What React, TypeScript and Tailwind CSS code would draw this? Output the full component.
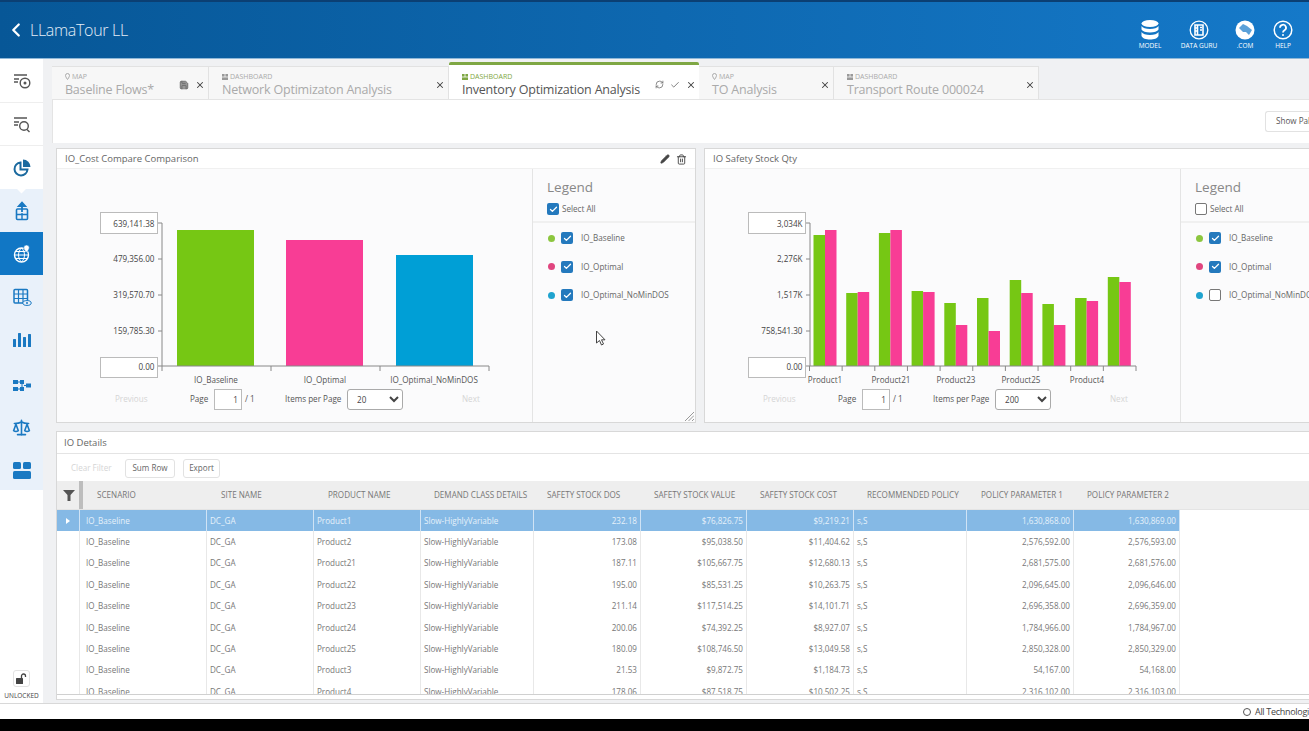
import { Check, ChevronLeft, Pencil, RefreshCw, Save, Scale, Trash2, X } from "lucide-react";
import type { ReactNode } from "react";

const GREEN = "#76c714";
const PINK = "#f83d95";
const BLUE = "#009fd6";

const columns = [
  { label: "SCENARIO", pad: "pl-[17px]" },
  { label: "SITE NAME", pad: "pl-[14px]" },
  { label: "PRODUCT NAME", pad: "pl-[14px]" },
  { label: "DEMAND CLASS DETAILS", pad: "pl-[13px]" },
  { label: "SAFETY STOCK DOS", pad: "pl-[13px]" },
  { label: "SAFETY STOCK VALUE", pad: "pl-[13px]" },
  { label: "SAFETY STOCK COST", pad: "pl-[13px]" },
  { label: "RECOMMENDED POLICY", pad: "pl-[13px]" },
  { label: "POLICY PARAMETER 1", pad: "pl-[14px]" },
  { label: "POLICY PARAMETER 2", pad: "pl-[13px]" },
];

const rows = [
  ["Product1", "232.18", "$76,826.75", "$9,219.21", "1,630,868.00", "1,630,869.00"],
  ["Product2", "173.08", "$95,038.50", "$11,404.62", "2,576,592.00", "2,576,593.00"],
  ["Product21", "187.11", "$105,667.75", "$12,680.13", "2,681,575.00", "2,681,576.00"],
  ["Product22", "195.00", "$85,531.25", "$10,263.75", "2,096,645.00", "2,096,646.00"],
  ["Product23", "211.14", "$117,514.25", "$14,101.71", "2,696,358.00", "2,696,359.00"],
  ["Product24", "200.06", "$74,392.25", "$8,927.07", "1,784,966.00", "1,784,967.00"],
  ["Product25", "180.09", "$108,746.50", "$13,049.58", "2,850,328.00", "2,850,329.00"],
  ["Product3", "21.53", "$9,872.75", "$1,184.73", "54,167.00", "54,168.00"],
  ["Product4", "178.06", "$87,518.75", "$10,502.25", "2,316,102.00", "2,316,103.00"],
];

function Svg({ children, size = 20, color = "currentColor" }: { children: ReactNode; size?: number; color?: string }) {
  return (
    <svg width={size} height={size} viewBox="0 0 20 20" fill="none" stroke={color} strokeWidth="1.4" className="shrink-0">
      {children}
    </svg>
  );
}

const sideIcons: { key: string; node: ReactNode }[] = [
  {
    key: "history",
    node: (
      <Svg color="#555">
        <path d="M2 4h13M2 8h5M2 11h4" />
        <circle cx="13" cy="12" r="4.8" />
        <circle cx="13" cy="12" r="0.8" fill="#555" />
      </Svg>
    ),
  },
  {
    key: "search",
    node: (
      <Svg color="#555">
        <path d="M2 4h13M2 8h5M2 11h4" />
        <circle cx="12" cy="12" r="4.3" />
        <path d="M15 15.5l2.5 2.5" />
      </Svg>
    ),
  },
  {
    key: "pie",
    node: (
      <Svg color="#1b6a9f" size={20}>
        <path d="M8.5 4.5a6.5 6.5 0 1 0 7 7H8.5z" strokeWidth="2" />
        <path d="M11 1.5a7.5 7.5 0 0 1 7.5 7.5H11z" fill="#1b6a9f" stroke="none" />
      </Svg>
    ),
  },
  {
    key: "upload",
    node: (
      <Svg color="#1a79c2">
        <rect x="4.5" y="8" width="11" height="10.5" rx="1" strokeWidth="1.6" />
        <path d="M4.5 13.5h11M10 12v6.5" strokeWidth="1.4" />
        <path d="M10 11V2M6.8 5L10 1.5 13.200 5z" strokeWidth="1.8" fill="#1a79c2" />
      </Svg>
    ),
  },
  {
    key: "globe",
    node: (
      <Svg color="#fff" size={20}>
        <circle cx="9.500" cy="11" r="7" />
        <path d="M2.500 11h14M3.500 7.500h12M3.500 14.500h12M9.500 4c-4 4-4 10 0 14M9.500 4c4 4 4 10 0 14" strokeWidth="1" />
        <path d="M14.500 1a2.800 2.800 0 0 1 2.800 2.800c0 2-2.800 4.500-2.800 4.500s-2.800-2.500-2.800-4.500A2.800 2.800 0 0 1 14.500 1z" fill="#fff" stroke="#1177c5" strokeWidth="0.6" />
      </Svg>
    ),
  },
  {
    key: "table",
    node: (
      <Svg color="#1a79c2">
        <rect x="2" y="2.500" width="13.500" height="13.500" rx="1" strokeWidth="1.500" />
        <path d="M2 7h13.500M2 11.500h13.500M6.500 2.500V16M11 2.500V16" strokeWidth="1.200" />
        <ellipse cx="15" cy="16" rx="4.200" ry="2.400" fill="#e9f1fa" strokeWidth="1" />
        <circle cx="15" cy="16" r="1" fill="#1a79c2" stroke="none" />
      </Svg>
    ),
  },
  {
    key: "bars",
    node: (
      <svg width="18" height="15" viewBox="0 0 18 15" fill="#1a79c2" className="shrink-0">
        <rect x="0" y="7" width="3" height="8" rx="0.5" />
        <rect x="5" y="1" width="3" height="14" rx="0.5" />
        <rect x="10" y="5" width="3" height="10" rx="0.5" />
        <rect x="15" y="2" width="3" height="13" rx="0.5" />
      </svg>
    ),
  },
  {
    key: "flow",
    node: (
      <svg width="18" height="11" viewBox="0 0 18 11" fill="#1a79c2" className="shrink-0">
        <rect x="0" y="0" width="5" height="4" />
        <rect x="7" y="0" width="4" height="4" />
        <rect x="0" y="7" width="5" height="4" />
        <rect x="7" y="7" width="4" height="4" />
        <rect x="13" y="3.500" width="5" height="4" />
        <path d="M5 1.500h2v1H5zM5 8.500h2v1H5zM11 5h2v1h-2zM8.500 4h1v3h-1z" />
      </svg>
    ),
  },
  { key: "scale", node: <Scale size={19} color="#1a79c2" strokeWidth={2} className="shrink-0" /> },
  {
    key: "blocks",
    node: (
      <svg width="18" height="17" viewBox="0 0 18 17" fill="#1a79c2" className="shrink-0">
        <rect x="0" y="0" width="8" height="7" rx="1.500" />
        <rect x="10" y="0" width="8" height="7" rx="1.500" />
        <rect x="0" y="9" width="18" height="8" rx="1.500" />
      </svg>
    ),
  },
];

function Sidebar() {
  return (
    <aside className="w-[43px] shrink-0 flex flex-col bg-white">
      <div className="h-px" />
      {sideIcons.map((item, i) => (
        <div
          key={item.key}
          className={`relative h-[43px] flex items-center justify-center ${
            i === 4 ? "bg-[#1177c5]" : i > 2 ? "bg-[#e9f1fa]" : "bg-white"
          } ${i < 2 ? "border-b border-[#eeeeee]" : ""} ${i === 7 ? "pt-[5px]" : i > 7 ? "pt-1" : ""}`}
        >
          {i === 3 && <span className="absolute -top-[4px] left-[18px] w-[7px] h-[7px] rotate-45 bg-white" />}
          {item.node}
        </div>
      ))}
      <div className="mt-auto flex flex-col items-center pb-[3px]">
        <div className="w-[17px] h-[17px] rounded-[3px] border border-[#e2e2e2] flex items-center justify-center">
          <svg width="11" height="11" viewBox="0 0 11 11" fill="#444">
            <rect x="0" y="5" width="7" height="6" rx="0.500" />
            <path d="M5.500 5V3a2 2 0 0 1 4 0v1" fill="none" stroke="#444" strokeWidth="1.300" />
          </svg>
        </div>
        <span className="mt-[4px] text-[6.5px] leading-[9px] text-[#444]">UNLOCKED</span>
      </div>
    </aside>
  );
}

function HeaderItem({ label, icon, className }: { label: string; icon: ReactNode; className: string }) {
  return (
    <div className={`flex flex-col items-center ${className}`}>
      <div className="h-[22px] flex items-center justify-center">{icon}</div>
      <span className="text-[6.5px] leading-[9px] text-white whitespace-nowrap">{label}</span>
    </div>
  );
}

function Header() {
  return (
    <header className="h-[59px] shrink-0 flex items-center border-t-2 border-b border-t-[#0b3f73] border-b-[#8fb8d8] bg-gradient-to-r from-[#075797] to-[#1579c9] pl-[5px] pr-[17px]">
      <ChevronLeft size={22} color="#fff" strokeWidth={2.500} />
      <span className="ml-[3px] text-[16px] font-light text-[#e4eef7] tracking-[-0.3px]">LLamaTour LL</span>
      <div className="ml-auto self-start flex items-start pt-[17px]">
        <HeaderItem
          label="MODEL"
          className="w-[24px]"
          icon={
            <svg width="18" height="20" viewBox="0 0 18 20" fill="#fff">
              <ellipse cx="9" cy="3.500" rx="8.500" ry="3.500" />
              <path d="M0.500 6c1 2 4.500 3 8.500 3s7.500-1 8.500-3v3.500c-1 2-4.500 3-8.500 3s-7.500-1-8.500-3zM0.500 12c1 2 4.500 3 8.500 3s7.500-1 8.500-3v4c-1 2.500-4.500 3.500-8.500 3.500S1.500 18.500.5 16z" />
            </svg>
          }
        />
        <HeaderItem
          label="DATA GURU"
          className="w-[38px] ml-[18px]"
          icon={
            <svg width="20" height="20" viewBox="0 0 20 20" fill="none" stroke="#fff" strokeWidth="1.300">
              <circle cx="10" cy="10" r="8.800" />
              <path d="M6 5h8v10H6zM8.500 5v10M6 8h3M6 11h3" strokeWidth="1.600" />
              <path d="M11 7.500h2M11 10h2" strokeWidth="1.400" />
            </svg>
          }
        />
        <HeaderItem
          label=".COM"
          className="w-[18px] ml-[18px]"
          icon={
            <svg width="20" height="20" viewBox="0 0 20 20" fill="#fff">
              <circle cx="10" cy="10" r="9.500" />
              <path d="M4 8l4-4 4 2 5 4-3 5-3-3-3 0z" fill="#1579c9" opacity="0.700" />
            </svg>
          }
        />
        <HeaderItem
          label="HELP"
          className="w-[18px] ml-[20px]"
          icon={
            <svg width="20" height="20" viewBox="0 0 20 20" fill="none" stroke="#fff" strokeWidth="1.500">
              <circle cx="10" cy="10" r="8.800" />
              <path d="M7 7.800a3 3 0 1 1 4.500 2.500c-1 .6-1.500 1.200-1.500 2.200" strokeWidth="1.800" />
              <circle cx="10" cy="15" r="1" fill="#fff" stroke="none" />
            </svg>
          }
        />
      </div>
    </header>
  );
}

function DashGlyph({ color }: { color: string }) {
  return (
    <svg width="6" height="6" viewBox="0 0 6 6" fill={color} className="shrink-0">
      <rect x="0" y="0" width="2.600" height="2.600" />
      <rect x="3.400" y="0" width="2.600" height="2.600" />
      <rect x="0" y="3.400" width="6" height="2.600" />
    </svg>
  );
}

function MapGlyph() {
  return (
    <svg width="5" height="7" viewBox="0 0 5 7" fill="none" stroke="#999" strokeWidth="0.800" className="shrink-0">
      <path d="M2.500.5A2 2 0 0 1 4.500 2.500C4.500 4 2.500 6.500 2.500 6.500S.5 4 .5 2.500A2 2 0 0 1 2.500.5z" />
    </svg>
  );
}

function Tab({
  kind,
  title,
  width,
  active,
  children,
}: {
  kind: "MAP" | "DASHBOARD";
  title: string;
  width: string;
  active?: boolean;
  children?: ReactNode;
}) {
  return (
    <div
      className={`${width} shrink-0 relative flex items-end pl-[13px] pr-[3px] ${
        active
          ? "h-[37px] -mt-[4px] bg-white border-t-[3px] border-t-[#7fa744] rounded-t-[2px] z-10 -mb-px"
          : "h-[33px] bg-[#f7f7f7] border-r border-t border-[#e2e2e2]"
      }`}
    >
      <div className="min-w-0 flex-1">
        <div className={`flex items-center gap-[2px] text-[7px] leading-[9px] ${active ? "text-[#7fa744]" : "text-[#aaaaaa]"}`}>
          {kind === "MAP" ? <MapGlyph /> : <DashGlyph color={active ? "#7fa744" : "#999"} />}
          {kind}
        </div>
        <div className={`text-[12.5px] tracking-[-0.2px] leading-[18px] whitespace-nowrap ${active ? "text-[#555]" : "text-[#aaaaaa]"}`}>{title}</div>
      </div>
      <div className="flex items-center gap-[6px] h-[21px] self-end mb-[4px]">
        {children}
        <X size={10} color="#444" strokeWidth={2.500} />
      </div>
    </div>
  );
}

function Tabs() {
  return (
    <div className="h-[33px] shrink-0 mt-[7px] flex items-start border-b border-[#e4e4e4] box-content">
      <Tab kind="MAP" title="Baseline Flows*" width="w-[157px]">
        <Save size={10} color="#666" fill="#999" />
      </Tab>
      <Tab kind="DASHBOARD" title="Network Optimizaton Analysis" width="w-[240px]" />
      <Tab kind="DASHBOARD" title="Inventory Optimization Analysis" width="w-[250px]" active>
        <RefreshCw size={9} color="#666" />
        <Check size={10} color="#666" />
      </Tab>
      <Tab kind="MAP" title="TO Analysis" width="w-[135px]" />
      <Tab kind="DASHBOARD" title="Transport Route 000024" width="w-[205px]" />
    </div>
  );
}

type Chart = {
  maxLabel: string;
  ticks: string[];
  bars: { x: number; w: number; top: number; fill: string }[];
  xTicks: number[];
  labels: { text: string; x: number }[];
  axisEnd: number;
};

const chartA: Chart = {
  maxLabel: "639,141.38",
  ticks: ["479,356.00", "319,570.70", "159,785.30"],
  bars: [
    { x: 120, w: 77, top: 61, fill: GREEN },
    { x: 229, w: 77, top: 71, fill: PINK },
    { x: 339, w: 77, top: 86, fill: BLUE },
  ],
  xTicks: [105, 214, 323, 432],
  labels: [
    { text: "IO_Baseline", x: 159 },
    { text: "IO_Optimal", x: 268 },
    { text: "IO_Optimal_NoMinDOS", x: 377 },
  ],
  axisEnd: 432,
};

const pairs = [
  [235, 230],
  [293, 292],
  [233, 230],
  [291, 292],
  [303, 325],
  [298, 331],
  [280, 293],
  [304, 325],
  [298, 301],
  [277, 282],
];

const chartB: Chart = {
  maxLabel: "3,034K",
  ticks: ["2,276K", "1,517K", "758,541.30"],
  bars: pairs.flatMap(([g, p], i) => [
    { x: 108.500 + i * 32.700, w: 11.500, top: g - 169, fill: GREEN },
    { x: 120.000 + i * 32.700, w: 11.500, top: p - 169, fill: PINK },
  ]),
  xTicks: Array.from({ length: 11 }, (_, i) => 104.500 + i * 32.650),
  labels: [
    { text: "Product1", x: 120 },
    { text: "Product21", x: 186 },
    { text: "Product23", x: 251 },
    { text: "Product25", x: 316 },
    { text: "Product4", x: 382 },
  ],
  axisEnd: 431,
};

function ChartPlot({ chart, left }: { chart: Chart; left: number }) {
  const base = 197;
  const tickY = [54, 90, 126, 162];
  const axisX = left + 67;
  return (
    <svg width="476" height="220" className="block font-['Open_Sans',sans-serif]">
      {chart.bars.map((b, i) => (
        <rect key={i} x={b.x} y={b.top} width={b.w} height={base - b.top} fill={b.fill} />
      ))}
      <path d={`M${axisX} 54V${base}M${axisX - 4} ${base}H${chart.axisEnd}`} stroke="#888" fill="none" />
      {chart.xTicks.map((x) => (
        <path key={x} d={`M${x} ${base}v5`} stroke="#888" />
      ))}
      {tickY.map((y) => (
        <path key={y} d={`M${axisX - 4} ${y}h4`} stroke="#888" />
      ))}
      <rect x={left + 5.500} y="43.500" width="57" height="21" fill="#fff" stroke="#bbb" />
      <rect x={left + 5.500} y="188.500" width="57" height="20" fill="#fff" stroke="#bbb" />
      <text x={left + 59.500} y="58" textAnchor="end" fontSize="8.100" fill="#444">{chart.maxLabel}</text>
      {chart.ticks.map((t, i) => (
        <text key={t} x={left + 59.500} y={tickY[i + 1] + 3} textAnchor="end" fontSize="8.100" fill="#444">{t}</text>
      ))}
      <text x={left + 59.500} y="201" textAnchor="end" fontSize="8.100" fill="#444">0.00</text>
      {chart.labels.map((l) => (
        <text key={l.text} x={l.x} y="214" textAnchor="middle" fontSize="8.100" fill="#555">{l.text}</text>
      ))}
    </svg>
  );
}

function Pager({ perPage }: { perPage: string }) {
  return (
    <div className="flex items-center h-[21px] text-[8.100px] text-[#555] whitespace-nowrap">
      <span className="ml-[58px] w-[75px] text-[#d5d5d5]">Previous</span>
      <span className="w-[24px]">Page</span>
      <input
        readOnly
        value="1"
        className="w-[28px] h-[21px] border border-[#bbb] bg-white text-right pr-[3px] text-[8.100px] text-[#444]"
      />
      <span className="ml-[3px] w-[40px]">/ 1</span>
      <span className="w-[62px]">Items per Page</span>
      <select className="w-[56px] h-[21px] border border-[#aaa] rounded-[3px] bg-white pl-[5px] text-[8.100px] text-[#444]" defaultValue={perPage}>
        <option>{perPage}</option>
      </select>
      <span className="ml-[59px] text-[#d5d5d5]">Next</span>
    </div>
  );
}

function CheckBox({ on }: { on: boolean }) {
  return (
    <span
      className={`w-[12px] h-[12px] shrink-0 rounded-[2px] flex items-center justify-center ${
        on ? "bg-[#2479bd]" : "bg-white border border-[#777]"
      }`}
    >
      {on && <Check size={9} color="#fff" strokeWidth={3.500} />}
    </span>
  );
}

function Legend({ all, items }: { all: boolean; items: { label: string; color: string; on: boolean }[] }) {
  return (
    <div className="w-[163px] shrink-0 border-l border-[#e4e4e4] text-[8.100px] text-[#666] overflow-hidden">
      <div className="h-[54px] border-b-2 border-[#f0f0f0] pl-[14px] pt-[9px]">
        <div className="text-[13.500px] leading-[18px] text-[#888]">Legend</div>
        <div className="flex items-center gap-[3px] mt-[7px]">
          <CheckBox on={all} />
          <span>Select All</span>
        </div>
      </div>
      <div className="pt-[1px]">
        {items.map((it) => (
          <div key={it.label} className="h-[28.500px] flex items-center pl-[15px] whitespace-nowrap">
            <span className="w-[7px] h-[7px] rounded-full" style={{ backgroundColor: it.color }} />
            <span className="ml-[6px]">
              <CheckBox on={it.on} />
            </span>
            <span className="ml-[8px]">{it.label}</span>
          </div>
        ))}
      </div>
    </div>
  );
}

function ChartPanel({
  title,
  chart,
  left,
  perPage,
  all,
  items,
  tools,
}: {
  title: string;
  chart: Chart;
  left: number;
  perPage: string;
  all: boolean;
  items: { label: string; color: string; on: boolean }[];
  tools?: boolean;
}) {
  return (
    <section className="relative w-[640px] h-[275px] shrink-0 bg-[#fbfbfc] border border-[#d8d8d8] flex flex-col">
      <div className="h-[20px] shrink-0 bg-white border-b border-[#f0f0f0] flex items-center px-[8px] pt-px text-[9.500px] text-[#666]">
        {title}
        {tools && (
          <div className="ml-auto flex items-center gap-[6px]">
            <Pencil size={10} color="#444" fill="#444" />
            <Trash2 size={11} color="#444" />
          </div>
        )}
      </div>
      <div className="flex flex-1 min-h-0">
        <div className="flex-1 min-w-0">
          <ChartPlot chart={chart} left={left} />
          <Pager perPage={perPage} />
        </div>
        <Legend all={all} items={items} />
      </div>
      <svg width="10" height="10" viewBox="0 0 10 10" stroke="#999" className="absolute right-[1px] bottom-[1px]">
        <path d="M1 10L10 1M4.500 10L10 4.500M8 10l2-2" />
      </svg>
    </section>
  );
}

function DetailsTable() {
  const grid = "grid w-[1123px] grid-cols-[23px_127px_107px_107px_113px_107px_106px_107px_113px_107px_106px]";
  return (
    <section className="w-[1290px] h-[269px] shrink-0 bg-white border border-[#d8d8d8] flex flex-col overflow-hidden">
      <div className="h-[22px] shrink-0 border-b border-[#e4e4e4] flex items-center pl-[7px] pt-[2px] text-[9.500px] text-[#666]">IO Details</div>
      <div className="h-[27px] shrink-0 flex items-center pt-px text-[8.100px] text-[#666]">
        <span className="ml-[14px] w-[54px] text-[#d5d5d5]">Clear Filter</span>
        <button className="w-[50px] h-[19px] border border-[#e2e2e2] rounded-[3px]">Sum Row</button>
        <button className="ml-[8px] w-[37px] h-[19px] border border-[#e2e2e2] rounded-[3px]">Export</button>
      </div>
      <div className="h-[28px] shrink-0 bg-[#eeeeee]">
        <div className={`${grid} h-full text-[8.100px] text-[#777] items-center whitespace-nowrap`}>
          <div className="h-full flex items-center justify-center relative">
            <svg width="12" height="11" viewBox="0 0 12 11" fill="#555">
              <path d="M0 0h12L7.500 5v6h-3V5z" />
            </svg>
            <span className="absolute right-[-3px] top-0 w-[4px] h-full bg-[#bdbdbd]" />
          </div>
          {columns.map((c) => (
            <div key={c.label} className={c.pad}>{c.label}</div>
          ))}
        </div>
      </div>
      <div className="h-[185px] shrink-0 overflow-hidden border-t border-[#e4e4e4]">
        {rows.map((r, i) => {
          const cell = `h-full flex items-center border-r ${i === 0 ? "border-[#cfe3f5]" : "border-[#e8e8e8]"}`;
          return (
            <div
              key={r[0]}
              className={`${grid} h-[21.400px] text-[8.100px] whitespace-nowrap ${
                i === 0 ? "bg-[#85b9e5] text-[#e6f1fa]" : "text-[#777]"
              }`}
            >
              <div className={`${cell} justify-center`}>
                {i === 0 && <span className="border-y-[3px] border-l-[4px] border-y-transparent border-l-white" />}
              </div>
              <div className={`${cell} pl-[6px]`}>IO_Baseline</div>
              <div className={`${cell} pl-[3px]`}>DC_GA</div>
              <div className={`${cell} pl-[3px]`}>{r[0]}</div>
              <div className={`${cell} pl-[3px]`}>Slow-HighlyVariable</div>
              <div className={`${cell} justify-end pr-[3px]`}>{r[1]}</div>
              <div className={`${cell} justify-end pr-[3px]`}>{r[2]}</div>
              <div className={`${cell} justify-end pr-[3px]`}>{r[3]}</div>
              <div className={`${cell} pl-[3px]`}>s,S</div>
              <div className={`${cell} justify-end pr-[3px]`}>{r[4]}</div>
              <div className={`${cell} justify-end pr-[3px]`}>{r[5]}</div>
            </div>
          );
        })}
      </div>
      <div className="h-[6px] shrink-0 overflow-hidden border-t border-[#d0d0d0] pl-[5px] pt-[2px] flex gap-[8px] text-[7px] leading-[9px] text-[#999] whitespace-nowrap">
        <span>ROWS: 475</span>
        <span className="ml-[14px]">SORTS: N</span>
        <span className="ml-[22px]">FILTERS: N</span>
      </div>
    </section>
  );
}

const legendA = [
  { label: "IO_Baseline", color: "#8cc63f", on: true },
  { label: "IO_Optimal", color: "#e0457f", on: true },
  { label: "IO_Optimal_NoMinDOS", color: "#1fa3cf", on: true },
];

const legendB = [
  { label: "IO_Baseline", color: "#8cc63f", on: true },
  { label: "IO_Optimal", color: "#e0457f", on: true },
  { label: "IO_Optimal_NoMinDOS", color: "#1fa3cf", on: false },
];

export default function App() {
  return (
    <div className="relative w-[1309px] h-[731px] overflow-hidden flex flex-col bg-black font-['Open_Sans',sans-serif]">
      <Header />
      <div className="h-[645px] shrink-0 flex bg-[#f0f1f3] border-b border-[#d8d8d8]">
        <Sidebar />
        <main className="flex-1 min-w-0 ml-[9px] flex flex-col">
          <Tabs />
          <div className="h-[43px] shrink-0 bg-white flex items-center justify-end pr-0 border-l border-[#e4e4e4]">
            <button className="w-[44px] h-[21px] border border-[#e2e2e2] rounded-l-[3px] border-r-0 text-[8.100px] text-[#555] text-left pl-[10px] overflow-hidden whitespace-nowrap">
              Show Pal
            </button>
          </div>
          <div className="flex-1 min-h-0 pl-[4px] pt-[5px]">
            <div className="flex gap-[8px]">
              <ChartPanel title="IO_Cost Compare Comparison" chart={chartA} left={38} perPage="20" all items={legendA} tools />
              <ChartPanel title="IO Safety Stock Qty" chart={chartB} left={38} perPage="200" all={false} items={legendB} />
            </div>
            <div className="mt-[8px]">
              <DetailsTable />
            </div>
          </div>
        </main>
      </div>
      <div className="h-[15px] shrink-0 bg-white flex items-center overflow-hidden pl-[1243px] text-[9px] tracking-[-0.3px] text-[#444] whitespace-nowrap">
        <span className="w-[8px] h-[8px] rounded-full border border-[#555] shrink-0 mr-[4px]" />
        <span>All Technologies</span>
      </div>
      <svg width="12" height="18" viewBox="0 0 12 18" className="absolute left-[595px] top-[330px]" fill="#fff" stroke="#444">
        <path d="M1.500 1v12l3-2.500 2 4.500 2-1-2-4.200h3.500z" />
      </svg>
    </div>
  );
}
